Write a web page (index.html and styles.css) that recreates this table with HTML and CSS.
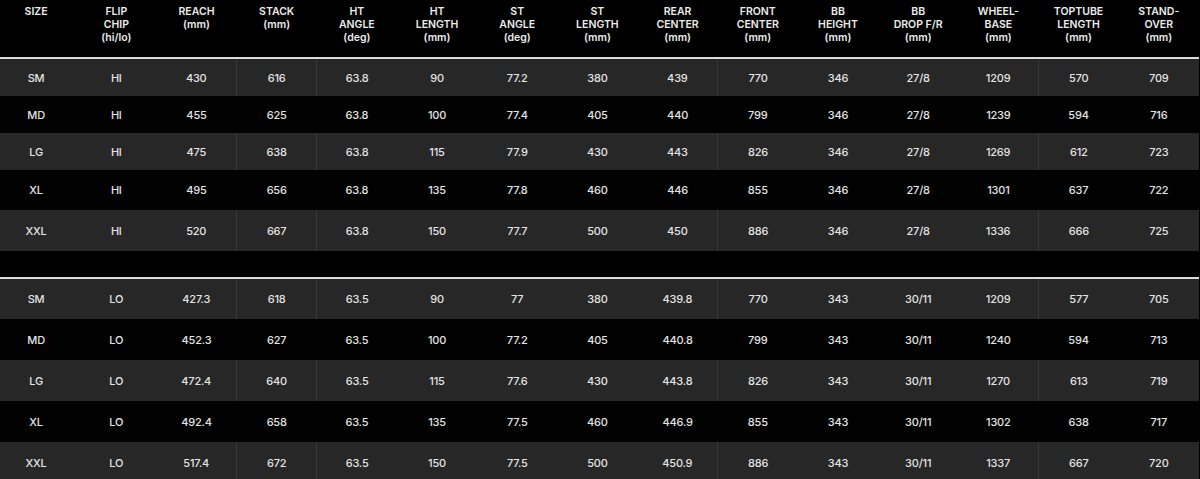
FILE: index.html
```html
<!DOCTYPE html>
<html>
<head>
<meta charset="utf-8">
<link rel="stylesheet" href="styles.css">
</head>
<body>
<table class="geo">
<thead>
<tr class="head">
<th>SIZE</th><th>FLIP<br>CHIP<br>(hi/lo)</th><th>REACH<br>(mm)</th><th>STACK<br>(mm)</th><th>HT<br>ANGLE<br>(deg)</th><th>HT<br>LENGTH<br>(mm)</th><th>ST<br>ANGLE<br>(deg)</th><th>ST<br>LENGTH<br>(mm)</th><th>REAR<br>CENTER<br>(mm)</th><th>FRONT<br>CENTER<br>(mm)</th><th>BB<br>HEIGHT<br>(mm)</th><th>BB<br>DROP F/R<br>(mm)</th><th>WHEEL-<br>BASE<br>(mm)</th><th>TOPTUBE<br>LENGTH<br>(mm)</th><th>STAND-<br>OVER<br>(mm)</th>
</tr>
</thead>
<tbody>
<tr class="rule"><td colspan="15"></td></tr>
<tr class="g h37"><td>SM</td><td>HI</td><td>430</td><td class="s">616</td><td class="s">63.8</td><td>90</td><td>77.2</td><td>380</td><td>439</td><td class="s">770</td><td>346</td><td>27/8</td><td>1209</td><td class="s">570</td><td>709</td></tr>
<tr class="b h37"><td>MD</td><td>HI</td><td>455</td><td>625</td><td>63.8</td><td>100</td><td>77.4</td><td>405</td><td>440</td><td>799</td><td>346</td><td>27/8</td><td>1239</td><td>594</td><td>716</td></tr>
<tr class="g h37"><td>LG</td><td>HI</td><td>475</td><td class="s">638</td><td class="s">63.8</td><td>115</td><td>77.9</td><td>430</td><td>443</td><td class="s">826</td><td>346</td><td>27/8</td><td>1269</td><td class="s">612</td><td>723</td></tr>
<tr class="b h40"><td>XL</td><td>HI</td><td>495</td><td>656</td><td>63.8</td><td>135</td><td>77.8</td><td>460</td><td>446</td><td>855</td><td>346</td><td>27/8</td><td>1301</td><td>637</td><td>722</td></tr>
<tr class="g h41"><td>XXL</td><td>HI</td><td>520</td><td class="s">667</td><td class="s">63.8</td><td>150</td><td>77.7</td><td>500</td><td>450</td><td class="s">886</td><td>346</td><td>27/8</td><td>1336</td><td class="s">666</td><td>725</td></tr>
<tr class="gap"><td colspan="15"></td></tr>
<tr class="rule"><td colspan="15"></td></tr>
<tr class="g h40"><td>SM</td><td>LO</td><td>427.3</td><td class="s">618</td><td class="s">63.5</td><td>90</td><td>77</td><td>380</td><td>439.8</td><td class="s">770</td><td>343</td><td>30/11</td><td>1209</td><td class="s">577</td><td>705</td></tr>
<tr class="b h41"><td>MD</td><td>LO</td><td>452.3</td><td>627</td><td>63.5</td><td>100</td><td>77.2</td><td>405</td><td>440.8</td><td>799</td><td>343</td><td>30/11</td><td>1240</td><td>594</td><td>713</td></tr>
<tr class="g h41"><td>LG</td><td>LO</td><td>472.4</td><td class="s">640</td><td class="s">63.5</td><td>115</td><td>77.6</td><td>430</td><td>443.8</td><td class="s">826</td><td>343</td><td>30/11</td><td>1270</td><td class="s">613</td><td>719</td></tr>
<tr class="b h41"><td>XL</td><td>LO</td><td>492.4</td><td>658</td><td>63.5</td><td>135</td><td>77.5</td><td>460</td><td>446.9</td><td>855</td><td>343</td><td>30/11</td><td>1302</td><td>638</td><td>717</td></tr>
<tr class="g h41"><td>XXL</td><td>LO</td><td>517.4</td><td class="s">672</td><td class="s">63.5</td><td>150</td><td>77.5</td><td>500</td><td>450.9</td><td class="s">886</td><td>343</td><td>30/11</td><td>1337</td><td class="s">667</td><td>720</td></tr>
</tbody>
</table>
</body>
</html>
```
FILE: styles.css
```css
html, body {
  margin: 0;
  padding: 0;
  background: #000;
  overflow: hidden;
}
.geo {
  width: 1203px;
  margin-left: -4px;
  table-layout: fixed;
  border-collapse: collapse;
  border-spacing: 0;
  font-family: "Inter", "Lato", sans-serif;
  color: #e4e4e4;
}
.geo th, .geo td {
  padding: 0;
  text-align: center;
  vertical-align: middle;
}
.head th {
  height: 57px;
  vertical-align: top;
  padding-top: 5px;
  box-sizing: border-box;
  font-size: 10.5px;
  line-height: 13px;
  font-weight: 600;
  color: #ececec;
}
.rule td {
  height: 2px;
  background: #dcdcdc;
}
.gap td {
  height: 26px;
  background: #000;
}
.geo tbody td {
  font-size: 11px;
  font-weight: 500;
  letter-spacing: -0.2px;
}
.g td { background: #272727; }
.b td { background: #020202; }
.g td.s { border-left: 1px solid #383838; }
.h37 td { height: 37px; }
.h40 td { height: 40px; }
.h41 td { height: 41px; }
```
